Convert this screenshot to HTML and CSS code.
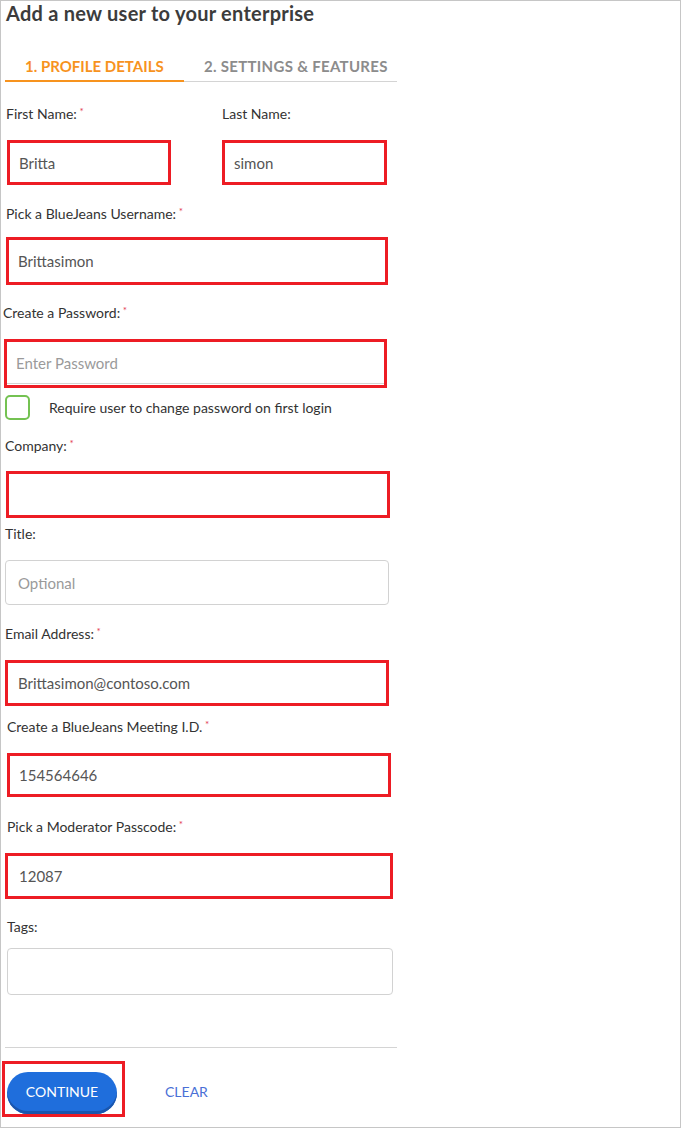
FILE: index.html
```html
<!DOCTYPE html>
<html>
<head>
<meta charset="utf-8">
<link rel="stylesheet" href="styles.css">
</head>
<body>
<div class="frame">
  <h1 class="title">Add a new user to your enterprise</h1>

  <div class="tabs">
    <div class="tab active">1. PROFILE DETAILS</div>
    <div class="tab">2. SETTINGS &amp; FEATURES</div>
  </div>

  <div class="name-row">
    <div class="field first">
      <div class="label">First Name: <span class="req">*</span></div>
      <div class="box box-first"><span class="val">Britta</span></div>
    </div>
    <div class="field last">
      <div class="label">Last Name:</div>
      <div class="box box-last"><span class="val">simon</span></div>
    </div>
  </div>

  <div class="field f-user">
    <div class="label">Pick a BlueJeans Username: <span class="req">*</span></div>
    <div class="box box-user"><span class="val">Brittasimon</span></div>
  </div>

  <div class="field f-pass">
    <div class="label">Create a Password: <span class="req">*</span></div>
    <div class="box box-pass"><div class="inner"><span class="ph">Enter Password</span></div></div>
  </div>

  <div class="check-row">
    <span class="checkbox"></span>
    <span class="check-text">Require user to change password on first login</span>
  </div>

  <div class="field f-company">
    <div class="label">Company: <span class="req">*</span></div>
    <div class="box box-company"></div>
  </div>

  <div class="field f-title">
    <div class="label">Title:</div>
    <div class="input input-title"><span class="ph">Optional</span></div>
  </div>

  <div class="field f-email">
    <div class="label">Email Address: <span class="req">*</span></div>
    <div class="box box-email"><span class="val">Brittasimon@contoso.com</span></div>
  </div>

  <div class="field f-meeting">
    <div class="label">Create a BlueJeans Meeting I.D. <span class="req">*</span></div>
    <div class="box box-meeting"><span class="val">154564646</span></div>
  </div>

  <div class="field f-passcode">
    <div class="label">Pick a Moderator Passcode: <span class="req">*</span></div>
    <div class="box box-passcode"><span class="val">12087</span></div>
  </div>

  <div class="field f-tags">
    <div class="label">Tags:</div>
    <div class="input input-tags"></div>
  </div>

  <div class="separator"></div>

  <div class="actions">
    <div class="btn-box">
      <button class="btn-continue">CONTINUE</button>
    </div>
    <span class="btn-clear">CLEAR</span>
  </div>
</div>
</body>
</html>
```

FILE: styles.css
```css
* { box-sizing: border-box; }

html, body {
  margin: 0;
  padding: 0;
  background: #ffffff;
}

body {
  font-family: Lato, "Open Sans", Arial, sans-serif;
  color: #333333;
}

.frame {
  width: 681px;
  height: 1128px;
  border: 1px solid #c6c6c6;
  padding-left: 4px;
  display: flex;
  flex-direction: column;
}

.title {
  margin: 0;
  padding-left: 1px;
  font-size: 20px;
  line-height: 24px;
  height: 24px;
  font-weight: 700;
  color: #3c3c3c;
  letter-spacing: 0.25px;
}

/* Tabs */
.tabs {
  margin-top: 25px;
  width: 392px;
  display: flex;
  align-items: flex-start;
  border-bottom: 1px solid #d4d4d4;
}

.tab {
  padding-top: 2px;
  line-height: 28px;
  height: 30px;
  font-size: 15px;
  font-weight: 700;
  color: #8c8c8c;
  padding-left: 20px;
  white-space: nowrap;
  letter-spacing: 0.3px;
}

.tab.active {
  width: 179px;
  height: 32px;
  padding-left: 20px;
  color: #f7931e;
  border-bottom: 2px solid #f7931e;
  margin-bottom: -1px;
  letter-spacing: 0;
}

/* Labels / fields */
.label {
  font-size: 14px;
  line-height: 16px;
  height: 16px;
  color: #333333;
  white-space: nowrap;
}

.req {
  color: #e23b52;
  font-size: 10px;
  line-height: 10px;
  vertical-align: top;
  margin-left: -1px;
}

.field {
  display: flex;
  flex-direction: column;
}

.box {
  border: 3px solid #ed1c24;
  display: flex;
  align-items: center;
  padding-left: 9px;
  margin-top: 18px;
}

.val {
  font-size: 15px;
  color: #555555;
}

.ph {
  font-size: 15px;
  color: #9a9a9a;
}

/* name row */
.name-row {
  margin-top: 24px;
  display: flex;
}

.field.first {
  margin-left: 1px;
  width: 165px;
}

.field.last {
  margin-left: 51px;
  width: 165px;
}

.box-first {
  height: 45px;
  margin-left: 1px;
  width: 164px;
}

.box-last {
  height: 45px;
  width: 165px;
}

/* username */
.f-user { margin-top: 21px; margin-left: 1px; }
.box-user { height: 48px; width: 382px; margin-top: 15px; }

/* password */
.f-pass { margin-top: 20px; margin-left: -2px; }
.box-pass {
  height: 49px;
  width: 383px;
  margin-left: 1px;
  padding: 0 0 1px 0;
  align-items: stretch;
}
.box-pass .inner {
  flex: 1;
  display: flex;
  align-items: center;
  padding-left: 9px;
  border-bottom: 1px solid #d3d3d3;
}

/* checkbox */
.check-row {
  margin-top: 7px;
  display: flex;
  align-items: center;
  height: 25px;
}

.checkbox {
  width: 25px;
  height: 25px;
  border: 2px solid #74c252;
  border-radius: 5px;
}

.check-text {
  margin-left: 19px;
  font-size: 14px;
  color: #333333;
}

/* company */
.f-company { margin-top: 18px; }
.box-company { height: 47px; width: 384px; margin-top: 17px; margin-left: 1px; }

/* title */
.f-title { margin-top: 8px; }
.input {
  border: 1px solid #d2d2d2;
  border-radius: 4px;
  display: flex;
  align-items: center;
  padding-left: 12px;
  margin-top: 18px;
}
.input-title { height: 45px; width: 384px; }

/* email */
.f-email { margin-top: 21px; }
.box-email { height: 46px; width: 384px; margin-top: 18px; padding-left: 10px; }

/* meeting */
.f-meeting { margin-top: 13px; margin-left: 2px; }
.box-meeting { height: 44px; width: 384px; margin-top: 18px; padding-left: 9px; }

/* passcode */
.f-passcode { margin-top: 22px; margin-left: 2px; }
.box-passcode { height: 46px; width: 388px; margin-top: 18px; margin-left: -2px; padding-left: 11px; }

/* tags */
.f-tags { margin-top: 20px; margin-left: 2px; }
.input-tags { height: 47px; width: 386px; margin-top: 13px; }

/* separator */
.separator {
  margin-top: 52px;
  width: 392px;
  height: 1px;
  background: #d4d4d4;
}

/* actions */
.actions {
  margin-top: 13px;
  margin-left: -3px;
  display: flex;
  align-items: center;
}

.btn-box {
  border: 3px solid #ed1c24;
  width: 123px;
  height: 56px;
  padding: 8px 0 0 2px;
}

.btn-continue {
  display: block;
  width: 110px;
  height: 42px;
  border: none;
  border-radius: 21px;
  background: #1f6edc;
  box-shadow: inset 0 -3px 0 #1a56ad;
  color: #ffffff;
  font-family: Lato, "Open Sans", Arial, sans-serif;
  font-size: 14px;
  font-weight: 400;
  padding: 0 0 4px 0;
  margin: 0;
}

.btn-clear {
  margin-left: 40px;
  padding-top: 4px;
  font-size: 14px;
  color: #4a6fd6;
}
```
